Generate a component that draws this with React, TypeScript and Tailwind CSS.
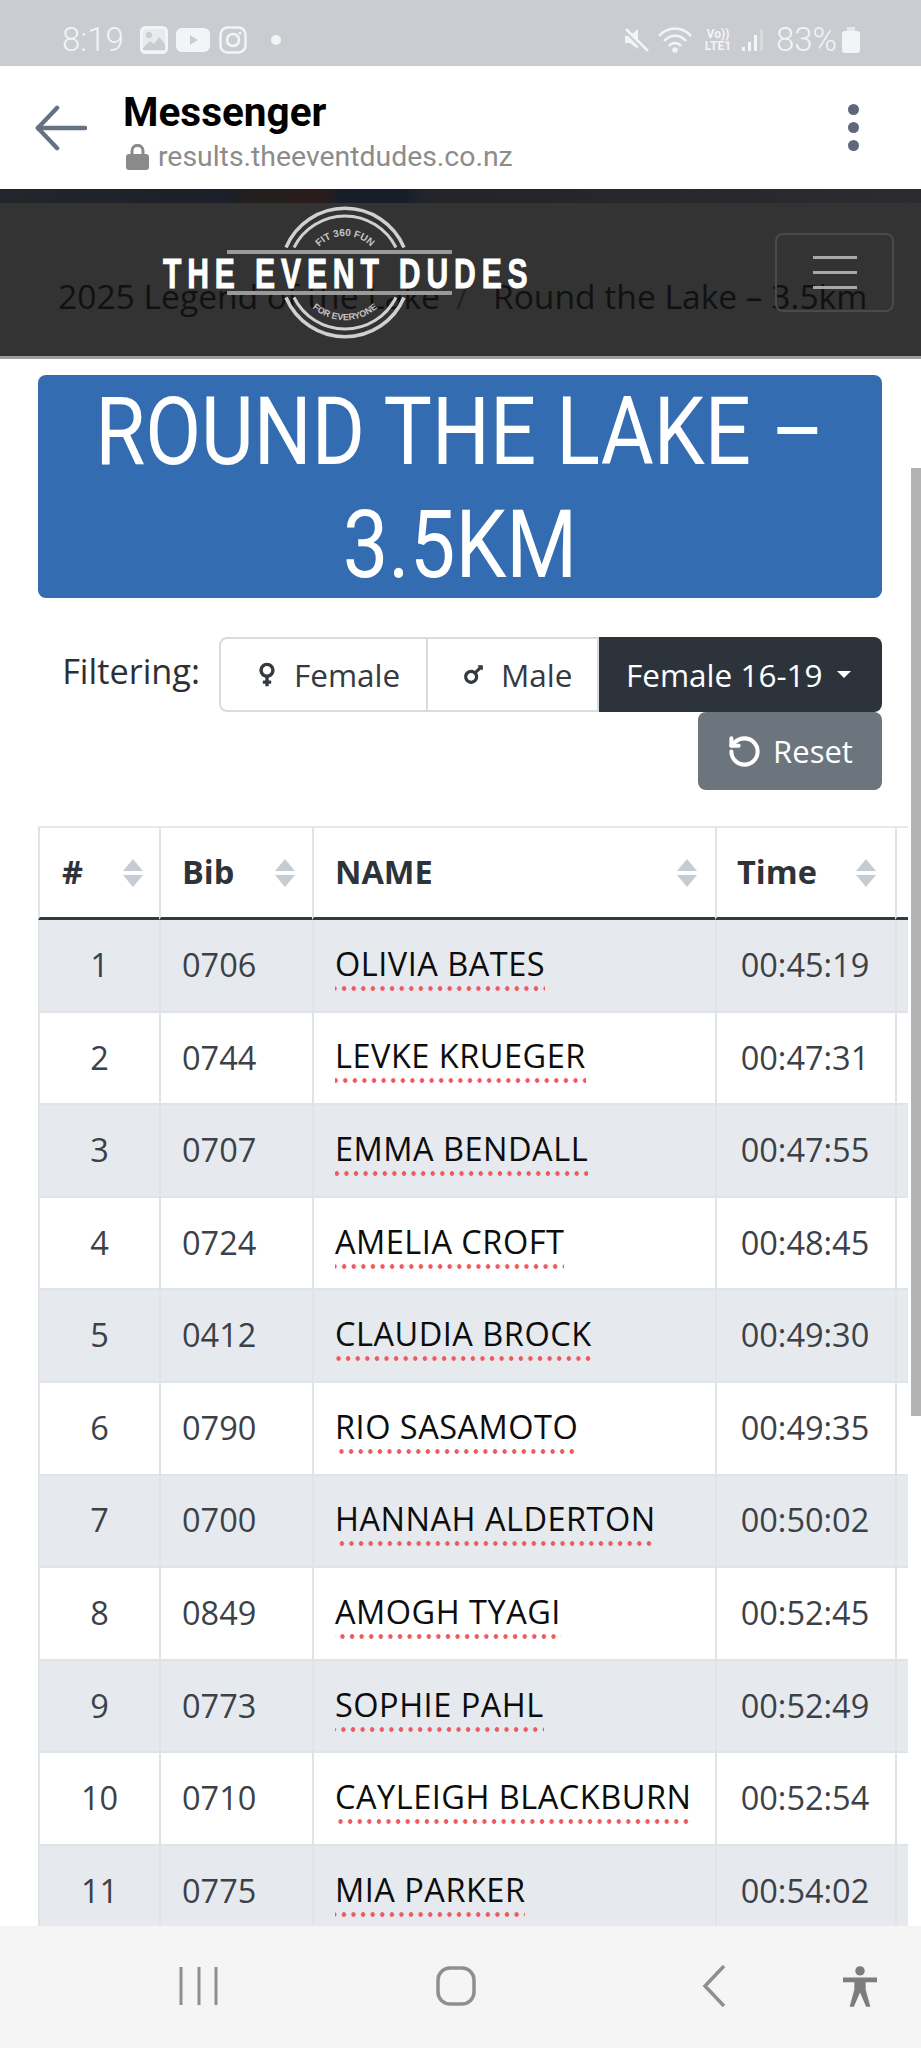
import { RotateCcw } from "lucide-react";
import { FaVenus, FaMars } from "react-icons/fa";

const rows = [
  ["1", "0706", "OLIVIA BATES", "00:45:19"],
  ["2", "0744", "LEVKE KRUEGER", "00:47:31"],
  ["3", "0707", "EMMA BENDALL", "00:47:55"],
  ["4", "0724", "AMELIA CROFT", "00:48:45"],
  ["5", "0412", "CLAUDIA BROCK", "00:49:30"],
  ["6", "0790", "RIO SASAMOTO", "00:49:35"],
  ["7", "0700", "HANNAH ALDERTON", "00:50:02"],
  ["8", "0849", "AMOGH TYAGI", "00:52:45"],
  ["9", "0773", "SOPHIE PAHL", "00:52:49"],
  ["10", "0710", "CAYLEIGH BLACKBURN", "00:52:54"],
  ["11", "0775", "MIA PARKER", "00:54:02"],
];

function SortIcon() {
  return (
    <svg width="20" height="28" viewBox="0 0 20 28" className="shrink-0">
      <path d="M10 0 L20 12 L0 12 Z" fill="#c5ccd3" />
      <path d="M0 16 L20 16 L10 28 Z" fill="#c5ccd3" />
    </svg>
  );
}

function StatusLeft() {
  return (
    <div className="flex items-center text-[#f3f4f6]">
      <span className="ml-[62px] w-[78px] font-['Roboto',sans-serif] font-light text-[33px] leading-none">8:19</span>
      <svg width="28" height="28" viewBox="0 0 28 28">
        <rect x="1.5" y="1.5" width="25" height="25" rx="4" fill="none" stroke="currentColor" strokeWidth="3" />
        <rect x="1.5" y="1.5" width="25" height="25" rx="4" fill="currentColor" fillOpacity="0.75" />
        <circle cx="9" cy="9" r="3" fill="#c9ccd1" />
        <path d="M3 22 L10 15 L14 18 L19 11 L25 18 V24 H3 Z" fill="#c9ccd1" />
      </svg>
      <svg width="34" height="24" viewBox="0 0 34 24" className="ml-[8px]">
        <rect width="34" height="24" rx="6" fill="currentColor" />
        <path d="M14 7 L22 12 L14 17 Z" fill="#c9ccd1" />
      </svg>
      <svg width="28" height="28" viewBox="0 0 28 28" className="ml-[9px]">
        <rect x="1.5" y="1.5" width="25" height="25" rx="7" fill="none" stroke="currentColor" strokeWidth="2.5" />
        <circle cx="14" cy="14" r="6" fill="none" stroke="currentColor" strokeWidth="2.5" />
        <circle cx="21" cy="7" r="1.5" fill="currentColor" />
      </svg>
      <span className="ml-[24px] w-[10px] h-[10px] rounded-full bg-current" />
    </div>
  );
}

function StatusRight() {
  return (
    <div className="flex items-center text-[#f3f4f6]">
      <svg width="26" height="26" viewBox="0 0 26 26">
        <path d="M2 9 H7 L15 2 V22 L7 16 H2 Z" fill="currentColor" />
        <path d="M2 3 L24 25" stroke="#c9ccd1" strokeWidth="4" />
        <path d="M3 2 L25 24" stroke="currentColor" strokeWidth="2.5" />
      </svg>
      <svg width="34" height="26" viewBox="0 0 34 26" fill="none" stroke="currentColor" strokeWidth="2.5" className="ml-[9px]">
        <path d="M1 9 C10 -1 24 -1 33 9" />
        <path d="M6 14 C12 7 22 7 28 14" />
        <path d="M11 19 C14 15 20 15 23 19" />
        <circle cx="17" cy="23" r="1.5" fill="currentColor" />
      </svg>
      <div className="ml-[9px] w-[34px] flex flex-col items-center font-['Roboto',sans-serif] font-bold text-[12px] leading-[12px]">
        <span>Vo))</span>
        <span>LTE1</span>
      </div>
      <svg width="22" height="24" viewBox="0 0 22 24" className="ml-[7px]" fill="currentColor">
        <rect x="0" y="19" width="3" height="4" />
        <rect x="6" y="14" width="3" height="9" />
        <rect x="12" y="7" width="3" height="16" />
        <rect x="18" y="1" width="3" height="22" fillOpacity="0.4" />
      </svg>
      <span className="ml-[12px] font-['Roboto',sans-serif] font-light text-[33px] leading-none">83%</span>
      <svg width="18" height="26" viewBox="0 0 18 26" className="ml-[5px]" fill="currentColor">
        <rect x="5" y="0" width="8" height="4" fillOpacity="0.7" />
        <rect x="0" y="4" width="18" height="22" rx="3" />
      </svg>
    </div>
  );
}

function Logo() {
  return (
    <svg width="380" height="140" viewBox="155 202 380 140" className="block">
      <defs>
        <path id="logoTop" d="M 311 260 A 36 36 0 0 1 379 260" />
        <path id="logoBottom" d="M 298 285 A 49 49 0 0 0 392 285" />
      </defs>
      <g fill="none" stroke="#d0d0d0">
        <path d="M 286 247.5 A 64 64 0 0 1 404 247.5" strokeWidth="3.5" />
        <path d="M 294 247.5 A 57 57 0 0 1 396 247.5" strokeWidth="3" />
        <path d="M 286 297.5 A 64 64 0 0 0 404 297.5" strokeWidth="3.5" />
        <path d="M 294 297.5 A 57 57 0 0 0 396 297.5" strokeWidth="3" />
      </g>
      <rect x="227" y="250" width="225" height="4" fill="#9a9a9a" />
      <rect x="227" y="291" width="225" height="4" fill="#9a9a9a" />
      <text fontFamily="Liberation Sans" fontWeight="700" fontSize="10" fill="#c4c4c4">
        <textPath href="#logoTop" startOffset="50%" textAnchor="middle">FIT 360 FUN</textPath>
      </text>
      <text fontFamily="Liberation Sans" fontWeight="700" fontSize="9" fill="#c4c4c4">
        <textPath href="#logoBottom" startOffset="50%" textAnchor="middle">FOR EVERYONE</textPath>
      </text>
      <text
        transform="translate(163 288) scale(0.7 1)"
        fontFamily="Liberation Sans"
        fontWeight="700"
        fontSize="43"
        fill="#ffffff"
        stroke="#ffffff"
        strokeWidth="1"
        textLength="521"
        lengthAdjust="spacing"
      >
        THE EVENT DUDES
      </text>
    </svg>
  );
}

function Hero() {
  return (
    <div className="relative h-[167px] bg-[#333333] border-b-[3px] border-[#9d9d9d] box-content">
      <div className="h-[14px] bg-[linear-gradient(90deg,#23262b_0%,#1a1f29_25%,#241e1c_27%,#241e1c_31%,#2b1c1c_33%,#2b1c1c_35%,#181e29_37%,#181e29_44%,#22242a_46%,#2a2c30_100%)]" />
      <div className="pt-[71px] pl-[58px] font-['Open_Sans',sans-serif] text-[33.6px] leading-[44px] text-[#111111] whitespace-nowrap">
        2025 Legend of the Lake<span className="mx-[16px] text-[#222222]">/</span> Round the Lake – 3.5km
      </div>
      <div className="absolute left-[155px] top-[13px]">
        <Logo />
      </div>
      <div className="absolute left-[775px] top-[44px] w-[119px] h-[79px] rounded-[8px] border-2 border-[#4a4a4a] flex flex-col items-center justify-center gap-[12px]">
        <span className="block w-[44px] h-[3px] bg-[#a8a8a8]" />
        <span className="block w-[44px] h-[3px] bg-[#a8a8a8]" />
        <span className="block w-[44px] h-[3px] bg-[#a8a8a8]" />
      </div>
    </div>
  );
}

export default function App() {
  return (
    <div className="relative w-[921px] h-[2048px] overflow-hidden bg-white flex flex-col font-['Open_Sans',sans-serif]">
      <div className="h-[66px] shrink-0 bg-[#c9ccd1] flex items-center justify-between pr-[61px] pt-[13px]">
        <StatusLeft />
        <StatusRight />
      </div>

      <div className="h-[123px] shrink-0 bg-white flex items-start">
        <svg width="52" height="46" viewBox="0 0 54 46" fill="none" stroke="#667283" strokeWidth="4.5" strokeLinecap="round" strokeLinejoin="round" className="ml-[35px] mt-[39px]">
          <path d="M52 23 H3" />
          <path d="M23 2 L3 23 L23 44" />
        </svg>
        <div className="ml-[36px] mt-[24px]">
          <div className="font-['Roboto',sans-serif] font-bold text-[40.5px] leading-[44px] text-black">Messenger</div>
          <div className="flex items-center mt-[8px]">
            <svg width="23" height="26" viewBox="0 0 23 26" className="ml-[3px]">
              <path d="M6 11 V7 C6 -0.5 17 -0.5 17 7 V11" fill="none" stroke="#8a8a8a" strokeWidth="3" />
              <rect x="0" y="10" width="23" height="16" rx="3" fill="#8a8a8a" />
            </svg>
            <span className="ml-[9px] font-['Roboto',sans-serif] text-[28.4px] leading-[30px] text-[#8c8c8c]">results.theeventdudes.co.nz</span>
          </div>
        </div>
        <div className="ml-auto mr-[62px] mt-[38px] flex flex-col gap-[7px]">
          <span className="block w-[11px] h-[11px] rounded-full bg-[#5f6779]" />
          <span className="block w-[11px] h-[11px] rounded-full bg-[#5f6779]" />
          <span className="block w-[11px] h-[11px] rounded-full bg-[#5f6779]" />
        </div>
      </div>

      <div className="relative flex-1 min-h-0 overflow-hidden">
        <Hero />

        <div className="ml-[38px] w-[844px]">
          <div className="mt-[16px] h-[223px] rounded-[8px] bg-[#336cb0] text-white font-['Roboto',sans-serif] text-[95px] leading-[113px] text-center">
            <div className="scale-x-[0.855] whitespace-nowrap -translate-x-[4px]">ROUND THE LAKE –</div>
            <div className="scale-x-[0.855] whitespace-nowrap">3.5KM</div>
          </div>

          <div className="mt-[39px] flex flex-col items-end">
            <div className="flex items-start">
              <span className="text-[34.3px] font-medium leading-[42px] mt-[13px] mr-[19px] text-[#2b3037]">Filtering:</span>
              <div className="flex h-[75px] text-[31.5px] leading-none">
                <div className="w-[209px] flex items-center pl-[36px] gap-[17px] rounded-l-[8px] border-2 border-[#d9dcdf] text-[#343a40]">
                  <FaVenus className="w-[20px] h-[27px]" />
                  <span>Female</span>
                </div>
                <div className="w-[171px] flex items-center pl-[33px] gap-[15px] border-y-2 border-r-2 border-[#d9dcdf] text-[#343a40]">
                  <FaMars className="w-[25px] h-[25px]" />
                  <span>Male</span>
                </div>
                <div className="w-[283px] flex items-center pl-[27px] gap-[14px] rounded-r-[8px] bg-[#2d333b] text-white">
                  <span>Female 16-19</span>
                  <span className="block w-0 h-0 border-x-[7px] border-x-transparent border-t-[7px] border-t-white" />
                </div>
              </div>
            </div>
            <div className="w-[184px] h-[78px] rounded-[8px] bg-[#6c757d] text-white text-[31px] leading-none flex items-center justify-center gap-[11px]">
              <RotateCcw className="w-[35px] h-[35px]" strokeWidth={2.75} />
              <span>Reset</span>
            </div>
          </div>
        </div>

        <div className="ml-[38px] mt-[36px] w-[870px] overflow-hidden">
          <table className="table-fixed w-[1100px] border-separate border-spacing-0 text-[32.5px]">
            <colgroup>
              <col className="w-[121px]" />
              <col className="w-[153px]" />
              <col className="w-[403px]" />
              <col className="w-[180px]" />
              <col className="w-[243px]" />
            </colgroup>
            <thead>
              <tr className="h-[94px] text-[#2d3339]">
                {[
                  ["#", "pl-[22px] pr-[16px]"],
                  ["Bib", "pl-[21px] pr-[17px]"],
                  ["NAME", "pl-[21px] pr-[18px]"],
                  ["Time", "pl-[20px] pr-[19px]"],
                ].map(([label, pad]) => (
                  <th key={label} className="p-0 border-l-2 border-t-2 border-b-[3px] border-l-[#e1e4e7] border-t-[#e6e8eb] border-b-[#343a40] font-bold text-left">
                    <div className={`flex items-center justify-between ${pad}`}>
                      <span>{label}</span>
                      <SortIcon />
                    </div>
                  </th>
                ))}
                <th className="p-0 border-l-2 border-t-2 border-b-[3px] border-l-[#e1e4e7] border-t-[#e6e8eb] border-b-[#343a40]" />
              </tr>
            </thead>
            <tbody>
              {rows.map((r, i) => {
                const stripe = i % 2 === 0 ? "bg-[#e6e9ee]" : "bg-white";
                const cell = `p-0 border-l-2 border-b-2 border-[#e1e4e7] ${stripe}`;
                return (
                  <tr key={r[0]} className="h-[92.6px] text-[#3b4147]">
                    <td className={`${cell} text-center`}>{r[0]}</td>
                    <td className={`${cell} pl-[21px]`}>{r[1]}</td>
                    <td className={`${cell} pl-[21px] text-[#0d0d0d] font-medium tracking-[0.5px] whitespace-nowrap`}>
                      <span className="inline-block pb-[5px] leading-[44px] bg-[radial-gradient(circle,#ee5b5f_2px,transparent_2.6px)] bg-[length:9.6px_5px] bg-repeat-x bg-bottom">{r[2]}</span>
                    </td>
                    <td className={`${cell} text-center pr-[2px]`}>{r[3]}</td>
                    <td className={cell} />
                  </tr>
                );
              })}
            </tbody>
          </table>
        </div>

        <div className="absolute right-0 top-[279px] w-[10px] h-[948px] bg-[#b3b3b3]" />
      </div>

      <div className="h-[122px] shrink-0 bg-[#f5f5f6] flex items-start">
        <svg width="40" height="40" viewBox="0 0 40 40" fill="none" stroke="#8f8f8f" strokeWidth="3" className="ml-[179px] mt-[40px]">
          <path d="M2 1 V39" />
          <path d="M20 1 V39" />
          <path d="M37 1 V39" />
        </svg>
        <svg width="40" height="40" viewBox="0 0 40 40" fill="none" stroke="#8f8f8f" strokeWidth="3.5" className="ml-[217px] mt-[40px]">
          <rect x="2" y="2" width="36" height="36" rx="12" />
        </svg>
        <svg width="24" height="42" viewBox="0 0 24 42" fill="none" stroke="#8f8f8f" strokeWidth="3.5" className="ml-[226px] mt-[39px]">
          <path d="M22 1 L3 21 L22 41" />
        </svg>
        <svg width="34" height="44" viewBox="0 0 36 44" fill="#7d7d7d" className="ml-[117px] mt-[38px]">
          <circle cx="18" cy="6" r="5" />
          <path d="M0 13 H36 V18 H24 V26 L29 44 H24.5 L18 29 L11.5 44 H7 L12 26 V18 H0 Z" />
        </svg>
      </div>
    </div>
  );
}
